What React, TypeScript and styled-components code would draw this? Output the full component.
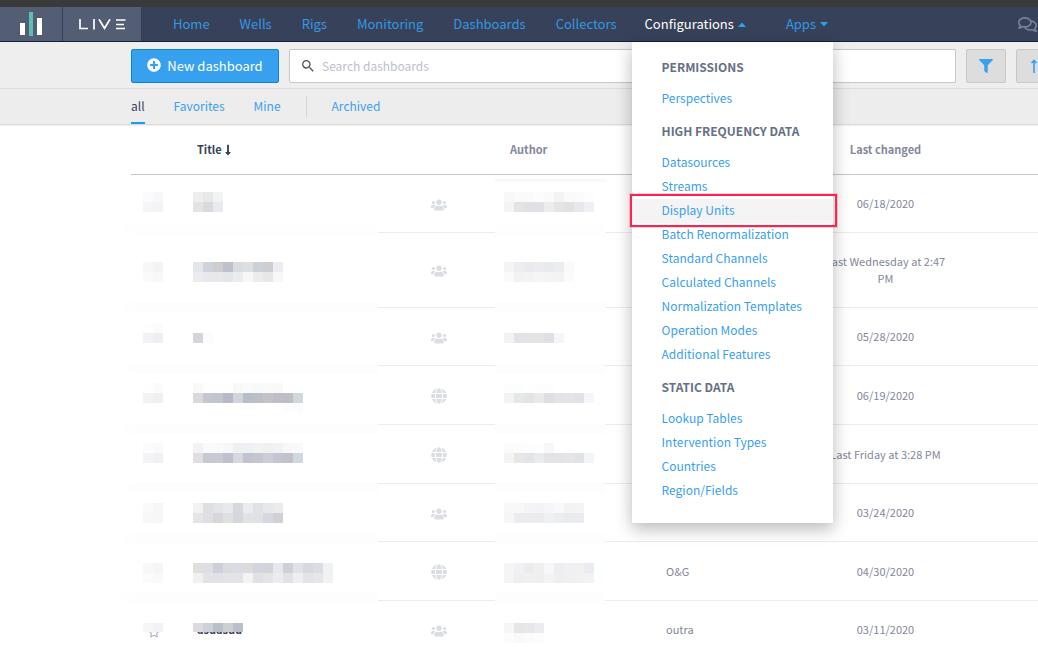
import React from "react";
import styled, { createGlobalStyle, css } from "styled-components";
import { FaFilter, FaGlobe, FaLongArrowAltDown, FaPlusCircle, FaRegComments, FaUsers, FaRegStar } from "react-icons/fa";
import { MdSearch } from "react-icons/md";

const GlobalStyle = createGlobalStyle`
  *, *::before, *::after { box-sizing: border-box; }
  body {
    margin: 0;
    background: #fff;
    font-family: "Noto Sans CJK SC", "Open Sans", sans-serif;
    font-size: 12px;
    color: #808095;
  }
  a { text-decoration: none; }
  button, input { font: inherit; }
`;

const Shell = styled.div`
  height: 100vh;
  overflow: hidden;
`;

const Page = styled.div`
  min-width: 1187px;
`;

const Content = styled.div`
  width: 925px;
  margin: 0 auto;
`;

const Strip = styled.div`
  height: 7px;
  background: #3a3a3a;
`;

const Header = styled.header`
  display: flex;
  height: 35px;
  background: #37415a;
  border-bottom: 1px solid #151e3a;
`;

const Brand = styled.a<{ $width: number }>`
  display: flex;
  align-items: center;
  justify-content: center;
  width: ${(p) => p.$width}px;
  background: #535d73;
  & + & { margin-left: 1px; }
`;

const Nav = styled.nav`
  display: flex;
  padding-left: 17px;
`;

const navText = css`
  display: flex;
  align-items: center;
  height: 34px;
  font-size: 13px;
  line-height: 20px;
  white-space: nowrap;
`;

const NavLink = styled.a`
  ${navText}
  padding: 0 15px;
  color: #3498e4;
`;

const DropdownHolder = styled.div`
  position: relative;
  margin-right: 14px;
`;

const DropdownButton = styled.button<{ $open?: boolean }>`
  ${navText}
  gap: 4px;
  padding: 0 13px;
  border: 0;
  background: none;
  color: ${(p) => (p.$open ? "#fff" : "#3498e4")};
`;

const HeaderTools = styled.div`
  display: flex;
  align-items: center;
  margin-left: auto;
  padding-right: 150px;
  color: #7b8296;
`;

const IconButton = styled.button`
  display: flex;
  padding: 0;
  border: 0;
  background: none;
  color: inherit;
`;

const Menu = styled.div`
  position: absolute;
  z-index: 2;
  top: 35px;
  left: 0;
  width: 201px;
  padding: 5px 0 20px;
  background: #fff;
  box-shadow: 0 6px 16px rgba(0, 0, 0, 0.28);
`;

const MenuHeading = styled.h2`
  margin: 0;
  padding: 0 30px;
  font-size: 12px;
  font-weight: 700;
  line-height: 40px;
  color: #667085;
`;

const MenuLink = styled.a<{ $active?: boolean }>`
  position: relative;
  display: block;
  padding: 0 30px 2px;
  font-size: 12px;
  line-height: 22px;
  color: #3aa0ee;
  background: ${(p) => (p.$active ? "#f4f4f4" : "none")};
`;

const Highlight = styled.span`
  position: absolute;
  inset: -5px -4px -4px -2px;
  border: 2px solid #fb2350;
  box-shadow: 0 0 0 1px rgba(251, 35, 80, 0.2);
`;

const Toolbar = styled.div`
  background: #eee;
  border-bottom: 1px solid #dcdcdc;
`;

const ToolbarRow = styled(Content)`
  display: flex;
  gap: 10px;
  padding: 7px 0 5px;
`;

const PrimaryButton = styled.button`
  display: flex;
  align-items: center;
  justify-content: center;
  gap: 6px;
  width: 148px;
  height: 34px;
  padding: 0 0 2px;
  border: 1px solid #0a86cf;
  border-radius: 2px;
  background: #38a1ef;
  color: #fff;
  font-size: 13px;
`;

const SearchBox = styled.label`
  display: flex;
  flex: 1;
  align-items: center;
  gap: 6px;
  height: 34px;
  padding: 0 10px;
  border: 1px solid #c8c8c8;
  border-radius: 2px;
  background: #fff;
  color: #555;
`;

const SearchInput = styled.input`
  flex: 1;
  padding: 0 0 2px;
  border: 0;
  outline: 0;
  font-size: 12px;
  &::placeholder { color: #bcc0cc; }
`;

const SquareButton = styled.button`
  display: flex;
  align-items: center;
  justify-content: center;
  width: 40px;
  height: 34px;
  padding: 0;
  border: 1px solid #c8c8c8;
  border-radius: 2px;
  background: #ddd;
  color: #38a1ef;
`;

const TabsBar = styled.div`
  background: #ededed;
  border-bottom: 1px solid #dadada;
  box-shadow: 0 1px 1px rgba(0, 0, 0, 0.05);
`;

const Tabs = styled(Content)`
  display: flex;
  align-items: flex-start;
  gap: 29px;
  height: 35px;
`;

const Tab = styled.a<{ $active?: boolean }>`
  height: 35px;
  font-size: 12px;
  line-height: 34px;
  color: ${(p) => (p.$active ? "#37415a" : "#3aa0ee")};
  border-bottom: ${(p) => (p.$active ? "2px solid #0ba3f2" : "0")};
`;

const ArchivedGroup = styled.div`
  display: flex;
  align-items: center;
  gap: 25px;
  margin-left: -4px;
  &::before {
    content: "";
    width: 1px;
    height: 21px;
    background: #d4d4d4;
  }
`;

const TableWrap = styled(Content)`
  position: relative;
`;

const Table = styled.table`
  width: 100%;
  table-layout: fixed;
  border-collapse: separate;
  border-spacing: 0;
`;

const Th = styled.th<{ $width?: number; $left?: number; $center?: boolean; $sorted?: boolean }>`
  width: ${(p) => (p.$width ? `${p.$width}px` : "auto")};
  height: 50px;
  padding: 0 12px 0 ${(p) => p.$left ?? 12}px;
  border-bottom: 1px solid #c8c8c8;
  font-size: 11px;
  font-weight: 700;
  line-height: 17px;
  text-align: ${(p) => (p.$center ? "center" : "left")};
  color: ${(p) => (p.$sorted ? "#37415a" : "#83889a")};
`;

const SortLabel = styled.span`
  display: inline-flex;
  align-items: center;
`;

const Td = styled.td<{ $left?: number; $center?: boolean; $strong?: boolean }>`
  padding: 20px 12px 20px ${(p) => p.$left ?? 12}px;
  border-bottom: 1px solid #ececec;
  font-size: 11px;
  line-height: 17px;
  text-align: ${(p) => (p.$center ? "center" : "left")};
  font-weight: ${(p) => (p.$strong ? 700 : 400)};
  color: ${(p) => (p.$strong ? "#37415a" : "#83879a")};
`;

const ShareIcon = styled.span<{ $height: number }>`
  display: flex;
  align-items: center;
  justify-content: center;
  height: ${(p) => p.$height}px;
  padding-top: 2px;
  color: #dadde1;
  svg { flex: none; }
`;

const FavoriteIcon = styled.span`
  display: flex;
  align-items: flex-end;
  height: 17px;
  color: #a4a9b6;
`;

const Redaction = styled.svg`
  position: absolute;
  top: 0;
  left: -8px;
  pointer-events: none;
`;

type Share = "group" | "public";

interface Row {
  share: Share;
  title?: string;
  group?: string;
  changed: string;
}

const rows: Row[] = [
  { share: "group", changed: "06/18/2020" },
  { share: "group", changed: "Last Wednesday at 2:47 PM" },
  { share: "group", changed: "05/28/2020" },
  { share: "public", changed: "06/19/2020" },
  { share: "public", changed: "Last Friday at 3:28 PM" },
  { share: "group", changed: "03/24/2020" },
  { share: "public", group: "O&G", changed: "04/30/2020" },
  { share: "group", title: "asdasdd", group: "outra", changed: "03/11/2020" },
];

const menu = [
  { heading: "PERMISSIONS", items: ["Perspectives"] },
  {
    heading: "HIGH FREQUENCY DATA",
    items: [
      "Datasources",
      "Streams",
      "Display Units",
      "Batch Renormalization",
      "Standard Channels",
      "Calculated Channels",
      "Normalization Templates",
      "Operation Modes",
      "Additional Features",
    ],
  },
  { heading: "STATIC DATA", items: ["Lookup Tables", "Intervention Types", "Countries", "Region/Fields"] },
];

/* Pixelated blocks hiding private values: x, y, then one colour per 10px cell. */
const STAR = 20;
const TITLE = 70;
const AUTHOR = 381;
const mosaic: [number, number, string][] = [
  [STAR, 67, "fbfbfb f7f8fa"],
  [STAR, 77, "f5f5f7 f3f4f6"],
  [TITLE, 67, "eeeeef e7e8e9 f2f3f5"],
  [TITLE, 77, "e3e3e4 d9dadd e7ebf0"],
  [AUTHOR, 67, "f8f8f8 fafafa fafafa fcfcfc fafafa f3f3f3 fafafa fbfbfb fdfdfd"],
  [AUTHOR, 77, "f4f4f4 e4e3e5 e0e1e5 e0e1e6 ecedef e5e5e6 e1e1e1 e8e8ea eff0f5"],
  [STAR, 137, "f7f7f7 f3f4f6"],
  [STAR, 147, "fafafa f7f8fa"],
  [TITLE, 137, "e5e6e8 ced2da cdcdcd bcc1cc dadbdf dedfe2 cbd1d9 cdced2 ecedf1"],
  [TITLE, 147, "ececee e7e8ed e8e8e8 e3e7ec eaecf0 f7f7f8 ebecee e7e7e8 f6f7f9"],
  [AUTHOR, 137, "f5f3f4 ededf0 e9eaee ececef e8eaee ebecee f9fafc"],
  [AUTHOR, 147, "fafafa f2f2f2 f3f3f3 f5f5f5 f4f4f5 f3f3f4 fbfbfb"],
  [STAR, 198, "fefefe fcfcfc"],
  [STAR, 208, "f2f2f4 edeff4"],
  [TITLE, 208, "d5d5d9 f9fdfe"],
  [AUTHOR, 208, "f2f2f2 e3e3e7 e2e3e5 e4e4e5 dfe0e6 f5f6f8"],
  [STAR, 258, "fefefe fafbfd"],
  [STAR, 268, "f2f2f3 eff0f2"],
  [TITLE, 258, "f9f9f9 fefefe fefefe fefefe f8f8f8 f9fafb f9f9fa fafafa f9f9fa"],
  [TITLE, 268, "dadada c3c7d0 c1c5ce b7bac6 d3d4d7 b8bec9 bbc0c7 c3c3c6 bcbeca bfbec3 d0d8df"],
  [TITLE + 90, 278, "fdfdfd fcfcfc"],
  [AUTHOR, 258, "fdfdfd fcfefd fdfefe fdfdfd fcfefd"],
  [AUTHOR, 268, "f3f3f3 e7e7e8 e3e4e9 e9e9ea dfdee1 e2e3e8 e4e4e6 e1e2e7 f5f6f9"],
  [STAR, 318, "fcfcfd f9fafc"],
  [STAR, 328, "f4f4f6 f0f1f4"],
  [TITLE, 318, "f2f3f5 f9fafa f8f9fb f6f7f9 f0f0f0 eff0f5 f2f2f4 eff0f2 f2f2f5 f8f8f8 f9f9f9"],
  [TITLE, 328, "e0dee1 c6c9d2 c8cad3 bec1cc d5d9dc bfc4ce c2c6cd cdced3 c3c5d1 c3c2c8 d0d9e2"],
  [AUTHOR, 318, "fbfbfb fafdfc fcfdfc fefefe f7f7f7"],
  [AUTHOR, 328, "f4f4f4 e7e7e7 e2e4e9 eaebec e4e2e5 e2e3e7 e5e5e7 e1e2e7 f4f5f8"],
  [STAR, 378, "fafafa f5f6f8"],
  [STAR, 388, "f8f8f9 f5f7f9"],
  [TITLE, 378, "f2f2f3 dddfe3 e3e4e7 e8e9eb d6d8de ebeced e0e2e6 e7e8ec eaebed"],
  [TITLE, 388, "e5e5e6 dce0e4 d7d6db dfe0e1 d4d7dd e1e2e6 e0e1e5 d5d8e0 d0d1d6"],
  [AUTHOR, 378, "f8f8f8 f8f8f9 f4f4f6 f2f3f5 f5f6f9 f9f9f9 f2f3f5 f3f4f6"],
  [AUTHOR, 388, "f6f6f6 ebecef ececee eaebed eff0f2 ecedf0 eaebed ebecef"],
  [STAR, 438, "f8f8f9 f4f5f7"],
  [STAR, 448, "fafbfb f8f9fb"],
  [TITLE, 438, "dfdfe0 dddfe2 cdd0d8 dadbdf d9dce4 dbdbdd d2d6dc d3d4d8 e5e9ee cfd0d5 e1e2e7 d8d9df dcdde2 f0f1f3"],
  [TITLE, 448, "f1f1f1 e2e3e7 e0e2e7 e4e4e6 e2e3e7 f3f3f3 e0e1e6 e5e5e7 ebecf0 e1e2e3 edeef2 e2e3e5 e5e6ea f1f2f4"],
  [AUTHOR, 438, "f5f5f5 f0f1f3 ebecee efeff0 f6f7f9 eeeef0 eff0f1 f1f1f1 ebecef fdfefe"],
  [AUTHOR, 448, "f5f5f5 efeff0 f0f0f0 efeff1 f3f3f5 efeff1 f0f0f1 f1f1f1 f1f2f3 fdfefe"],
  [STAR, 498, "f6f6f7 f1f2f6"],
  [TITLE, 498, "dcdce0 ced1d8 bac0ca cecfd3 bac0cb"],
  [AUTHOR, 498, "f7f5f6 e5e6e8 e7e7e9 ebecf0"],
  [AUTHOR, 508, "fcfcfc f9f9f9 fbfbfb fcfcfc"],
];

const bands = [97, 177, 238, 298, 357, 408, 468];

const Caret = ({ up }: { up?: boolean }) => (
  <svg width="8" height="6" viewBox="0 0 8 6" fill="#23a4f4" aria-hidden="true">
    <path d={up ? "M0 6 4 1.5 8 6z" : "M0 1h8L4 5.5z"} />
  </svg>
);

const LogoMark = () => (
  <svg width="22" height="24" viewBox="0 0 22 24" aria-hidden="true">
    <rect x="0" y="11" width="5" height="12" fill="#fff" />
    <rect x="9" y="0" width="4" height="24" fill="#5cc0b0" />
    <rect x="17" y="6" width="5" height="17" fill="#fff" />
  </svg>
);

const LiveMark = () => (
  <svg width="47" height="11" viewBox="0 0 47 11" fill="none" stroke="#fff" strokeWidth="1.7" aria-label="LIVE">
    <path d="M1 0v9.5h8M15 0v10.5M20 .3l5.5 9L31 .3M37 1h9.500M37 5.500h8M37 9.500h9" />
  </svg>
);

export default function App() {
  return (
    <Shell>
      <GlobalStyle />
      <Page>
        <Strip />
        <Header>
          <Brand href="#" $width={62} aria-label="Start"><LogoMark /></Brand>
          <Brand href="#" $width={78} aria-label="Live"><LiveMark /></Brand>
          <Nav>
            {["Home", "Wells", "Rigs", "Monitoring", "Dashboards", "Collectors"].map((name) => (
              <NavLink href="#" key={name}>{name}</NavLink>
            ))}
            <DropdownHolder>
              <DropdownButton $open aria-expanded="true">Configurations <Caret up /></DropdownButton>
              <Menu>
                {menu.map((section) => (
                  <section key={section.heading}>
                    <MenuHeading>{section.heading}</MenuHeading>
                    {section.items.map((item) => (
                      <MenuLink href="#" key={item} $active={item === "Display Units"}>
                        {item}
                        {item === "Display Units" && <Highlight />}
                      </MenuLink>
                    ))}
                  </section>
                ))}
              </Menu>
            </DropdownHolder>
            <DropdownHolder>
              <DropdownButton aria-expanded="false">Apps <Caret /></DropdownButton>
            </DropdownHolder>
          </Nav>
          <HeaderTools>
            <IconButton aria-label="Messages"><FaRegComments size={19} /></IconButton>
          </HeaderTools>
        </Header>

        <Toolbar>
          <ToolbarRow>
            <PrimaryButton><FaPlusCircle size={14} /> New dashboard</PrimaryButton>
            <SearchBox>
              <MdSearch size={16} />
              <SearchInput type="text" placeholder="Search dashboards" aria-label="Search dashboards" />
            </SearchBox>
            <SquareButton aria-label="Filter"><FaFilter size={14} /></SquareButton>
            <SquareButton aria-label="Sort">
              <svg width="16" height="14" viewBox="0 0 16 14" fill="none" stroke="currentColor" strokeWidth="1.6" aria-hidden="true">
                <path d="M6 14V1.500M3.500 4 6 1.500 8.500 4M13 0v12.500M10.500 10l2.500 2.500 2.500-2.500" />
              </svg>
            </SquareButton>
          </ToolbarRow>
        </Toolbar>

        <TabsBar>
          <Tabs>
            <Tab href="#" $active>all</Tab>
            <Tab href="#">Favorites</Tab>
            <Tab href="#">Mine</Tab>
            <ArchivedGroup><Tab href="#">Archived</Tab></ArchivedGroup>
          </Tabs>
        </TabsBar>

        <TableWrap>
          <Table>
            <thead>
              <tr>
                <Th $width={54} aria-label="Favorite" />
                <Th $width={193} aria-sort="ascending" $sorted>
                  <SortLabel>Title <FaLongArrowAltDown size={12} /></SortLabel>
                </Th>
                <Th $width={122} aria-label="Sharing" />
                <Th $width={110} $left={10}>Author</Th>
                <Th $width={200} aria-label="Group" />
                <Th $width={151} $center>Last changed</Th>
                <Th aria-label="Actions" />
              </tr>
            </thead>
            <tbody>
              {rows.map((row, i) => (
                <tr key={i}>
                  <Td $left={17}>{row.title && <FavoriteIcon><FaRegStar size={12} /></FavoriteIcon>}</Td>
                  <Td $strong>{row.title}</Td>
                  <Td $center>
                    <ShareIcon $height={row.share === "public" ? 18 : 17}>
                      {row.share === "public" ? <FaGlobe size={16} /> : <FaUsers size={16} />}
                    </ShareIcon>
                  </Td>
                  <Td />
                  <Td $left={56}>{row.group}</Td>
                  <Td $center>{row.changed}</Td>
                  <Td />
                </tr>
              ))}
            </tbody>
          </Table>
          <Redaction width="490" height="530" shapeRendering="crispEdges" aria-hidden="true">
            <rect x="372" y="54" width="110" height="3" fill="#f8f8f8" />
            {bands.map((y) => (
              <g key={y} fill={y === 97 ? "#fefefe" : "#fdfdfd"}>
                <rect x="0" y={y} width="11" height="11" fill="#fefefe" />
                <rect x="11" y={y} width="244" height={y === 97 ? 15 : 11} />
                <rect x="372" y={y} width="110" height={y === 97 ? 15 : 11} />
              </g>
            ))}
            {mosaic.map(([x, y, colors]) =>
              colors.split(" ").map((c, i) => (
                <rect key={`${x}-${y}-${i}`} x={x + i * 10} y={y} width="10" height={y === 498 && x < AUTHOR ? 9 : 10} fill={`#${c}`} />
              ))
            )}
          </Redaction>
        </TableWrap>
      </Page>
    </Shell>
  );
}
